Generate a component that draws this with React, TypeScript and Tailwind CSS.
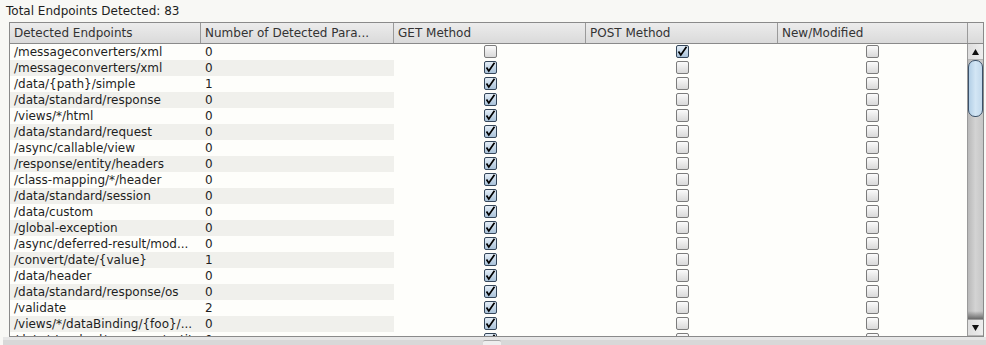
import React from 'react';

type Row = { path: string; params: string; get: boolean; post: boolean; changed: boolean };

const rows: Row[] = [
  { path: '/messageconverters/xml', params: '0', get: false, post: true, changed: false },
  { path: '/messageconverters/xml', params: '0', get: true, post: false, changed: false },
  { path: '/data/{path}/simple', params: '1', get: true, post: false, changed: false },
  { path: '/data/standard/response', params: '0', get: true, post: false, changed: false },
  { path: '/views/*/html', params: '0', get: true, post: false, changed: false },
  { path: '/data/standard/request', params: '0', get: true, post: false, changed: false },
  { path: '/async/callable/view', params: '0', get: true, post: false, changed: false },
  { path: '/response/entity/headers', params: '0', get: true, post: false, changed: false },
  { path: '/class-mapping/*/header', params: '0', get: true, post: false, changed: false },
  { path: '/data/standard/session', params: '0', get: true, post: false, changed: false },
  { path: '/data/custom', params: '0', get: true, post: false, changed: false },
  { path: '/global-exception', params: '0', get: true, post: false, changed: false },
  { path: '/async/deferred-result/mod...', params: '0', get: true, post: false, changed: false },
  { path: '/convert/date/{value}', params: '1', get: true, post: false, changed: false },
  { path: '/data/header', params: '0', get: true, post: false, changed: false },
  { path: '/data/standard/response/os', params: '0', get: true, post: false, changed: false },
  { path: '/validate', params: '2', get: true, post: false, changed: false },
  { path: '/views/*/dataBinding/{foo}/...', params: '0', get: true, post: false, changed: false },
  { path: '/data/standard/response/entity', params: '0', get: true, post: false, changed: false },
];

function CheckBox({ checked }: { checked: boolean }) {
  if (checked) {
    return (
      <div className="w-[13px] h-[13px] rounded-[2px] border border-[#34465a] bg-gradient-to-b from-[#e4eef7] to-[#a9c2d9] flex items-center justify-center">
        <svg width="11" height="11" viewBox="0 0 11 11">
          <path d="M1.5 5.5 L3.8 9 L9.5 0.8" fill="none" stroke="#000" strokeWidth="1.7" />
        </svg>
      </div>
    );
  }
  return (
    <div className="w-[13px] h-[13px] rounded-[2px] border border-[#7c7c7c] bg-gradient-to-b from-[#fbfbfb] to-[#d9d9d9]" />
  );
}

function Arrow({ up }: { up: boolean }) {
  return (
    <div className="h-[16px] flex items-center justify-center bg-gradient-to-r from-[#dedede] to-[#eeeeee] border-b border-[#b5b5b5]">
      <svg width="7" height="6" viewBox="0 0 7 6">
        <path d={up ? 'M3.5 0 L7 6 L0 6 Z' : 'M0 0 L7 0 L3.5 6 Z'} fill="#111" />
      </svg>
    </div>
  );
}

export default function App() {
  const headers = ['Detected Endpoints', 'Number of Detected Para...', 'GET Method', 'POST Method', 'New/Modified'];

  return (
    <div
      className="w-[986px] h-[345px] bg-[#f8f8f5] overflow-hidden text-[12px] text-[#1e1e1e]"
      style={{ fontFamily: '"DejaVu Sans", sans-serif' }}
    >
      <div className="h-[22px] pl-[6px] pt-[4px] leading-[14px]">Total Endpoints Detected: 83</div>

      {/* table */}
      <div className="ml-[9px] w-[975px] border border-[#8a8a8a] bg-[#fefefb]">
        <div className="grid grid-cols-[191px_193px_192px_192px_190px_15px] h-[21px] border-b border-[#8a8a8a] bg-gradient-to-b from-[#ececec] to-[#dadada]">
          {headers.map((h) => (
            <div key={h} className="border-r border-[#9a9a9a] pl-[4px] leading-[20px] text-[#333] whitespace-nowrap overflow-hidden">
              {h}
            </div>
          ))}
          <div />
        </div>

        <div className="flex h-[292px]">
          <div className="w-[957px] overflow-hidden">
            {rows.map((r, i) => (
              <div key={i} className="grid grid-cols-[191px_193px_192px_192px_189px] h-[16px] leading-[16px]">
                <div className={`pl-[4px] whitespace-nowrap overflow-hidden ${i % 2 === 1 ? 'bg-[#f0f0ec]' : ''}`}>{r.path}</div>
                <div className={`pl-[4px] ${i % 2 === 1 ? 'bg-[#f0f0ec]' : ''}`}>{r.params}</div>
                <div className="flex justify-center pt-[1px]"><CheckBox checked={r.get} /></div>
                <div className="flex justify-center pt-[1px]"><CheckBox checked={r.post} /></div>
                <div className="flex justify-center pt-[1px]"><CheckBox checked={r.changed} /></div>
              </div>
            ))}
          </div>

          {/* scrollbar */}
          <div className="w-[16px] border-l border-[#9a9a9a] flex flex-col bg-gradient-to-r from-[#b9b9b9] via-[#d3d3d3] to-[#c6c6c6]">
            <Arrow up />
            <div className="h-[57px] rounded-[7px] border border-[#3b5169] bg-gradient-to-r from-[#b3cfe6] via-[#d3e6f5] to-[#c2d9ec]" />
            <div className="flex-1 flex flex-col justify-end">
              <div className="h-[8px] bg-gradient-to-b from-transparent to-[#6a6a6a]" />
            </div>
            <div className="border-t border-[#9a9a9a]">
              <Arrow up={false} />
            </div>
          </div>
        </div>
      </div>

      {/* split divider */}
      <div className="ml-[3px] h-[8px] border-t-[3px] border-[#e6e6e6] bg-[#d8d8d8] flex justify-center">
        <div className="w-[18px] h-[5px] rounded-t-[2px] border-t border-[#a8a8a8] bg-[#eeeeee] ml-[-6px]" />
      </div>
    </div>
  );
}
